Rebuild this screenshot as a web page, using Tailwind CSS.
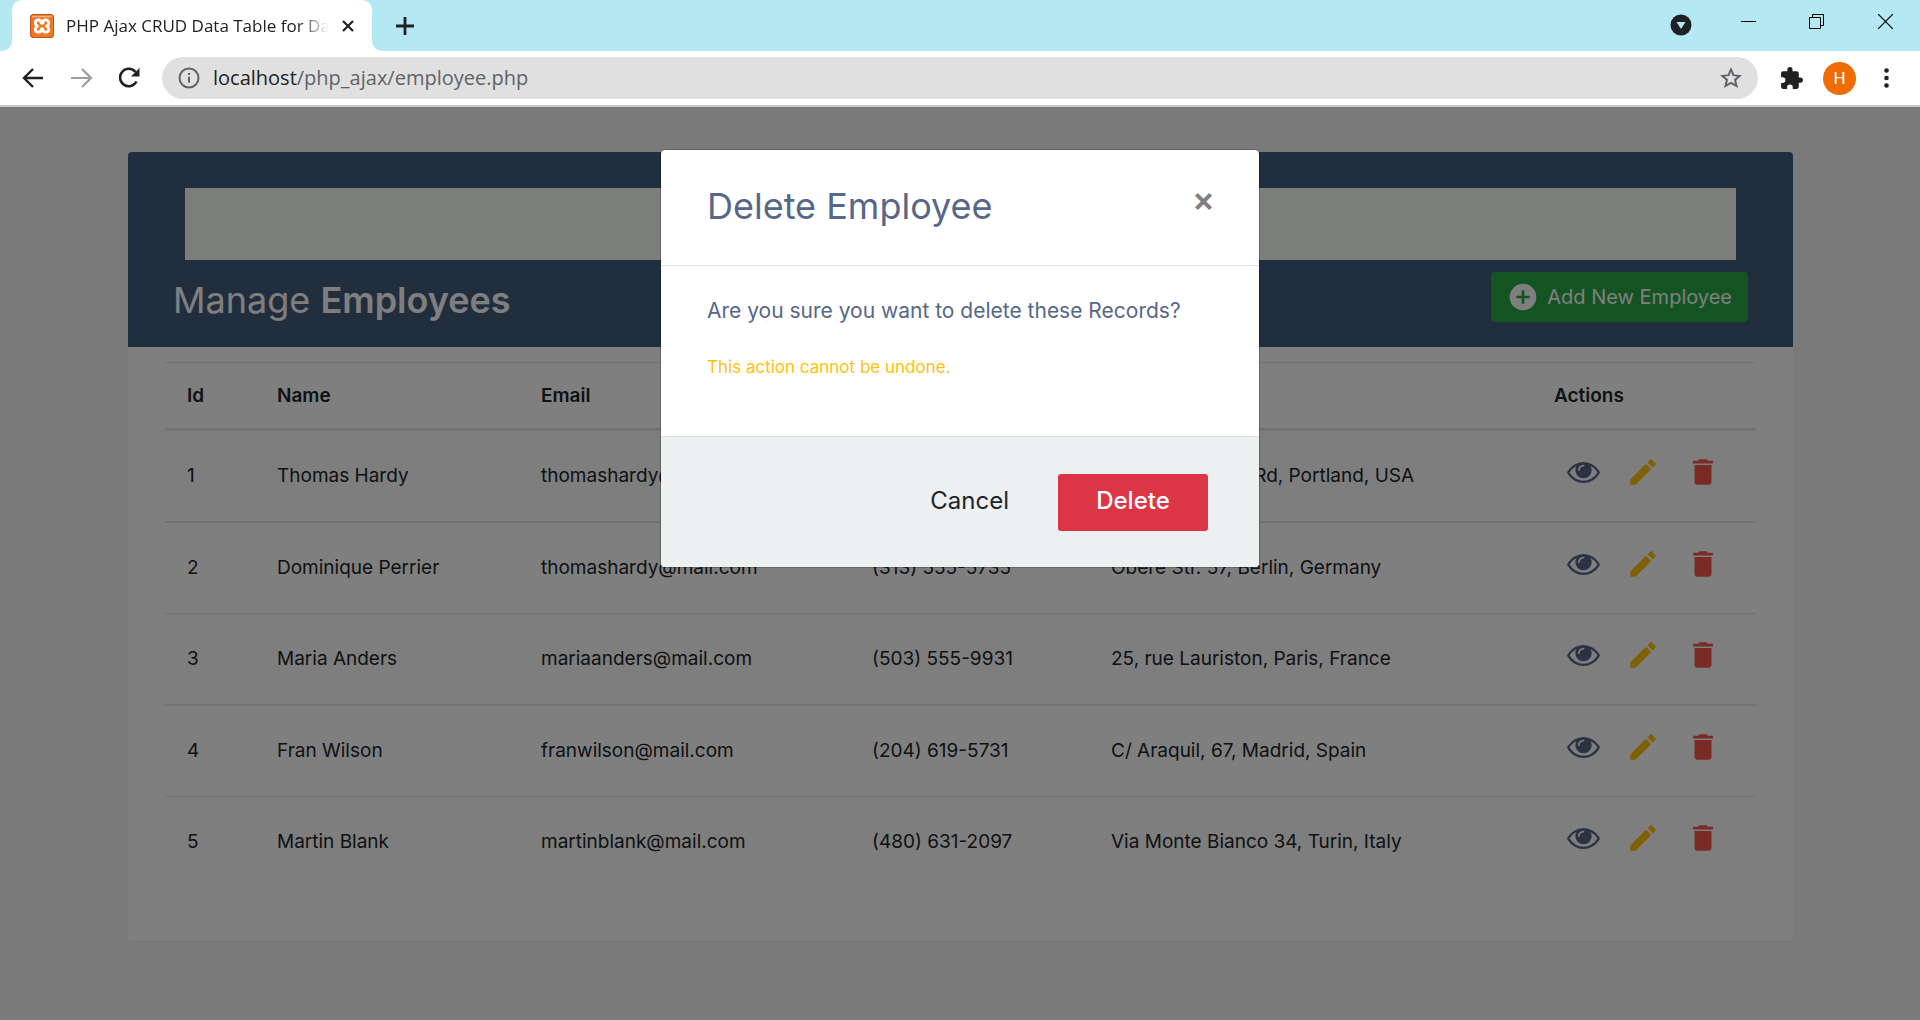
<!DOCTYPE html>
<html lang="en">
<head>
<meta charset="utf-8">
<meta name="viewport" content="width=device-width, initial-scale=1">
<title>PHP Ajax CRUD Data Table for Database</title>
<script src="https://cdn.jsdelivr.net/npm/@tailwindcss/browser@4"></script>
</head>
<body class="flex min-h-screen flex-col bg-[#f5f5f5] font-['Inter',sans-serif]">

<svg class="hidden">
  <symbol id="eye" viewBox="0 384 1792 1152"><path d="M1664 960q-152-236-381-353 61 104 61 225 0 185-131.5 316.5t-316.5 131.5-316.5-131.5-131.5-316.5q0-121 61-225-229 117-381 353 133 205 333.5 326.5t434.5 121.5 434.5-121.5 333.5-326.5zm-720-384q0-20-14-34t-34-14q-125 0-214.5 89.5t-89.5 214.5q0 20 14 34t34 14 34-14 14-34q0-86 61-147t147-61q20 0 34-14t14-34zm848 384q0 34-20 69-140 230-376.5 368.5t-499.5 138.5-499.5-139-376.5-368q-20-35-20-69t20-69q140-229 376.5-368t499.5-139 499.5 139 376.5 368q20 35 20 69z"/></symbol>
  <symbol id="edit" viewBox="0 0 24 24"><path d="M3 17.25V21h3.75L17.81 9.94l-3.75-3.75L3 17.25zM20.71 7.04c.39-.39.39-1.02 0-1.41l-2.34-2.34c-.39-.39-1.02-.39-1.41 0l-1.83 1.83 3.75 3.75 1.83-1.83z"/></symbol>
  <symbol id="trash" viewBox="0 0 24 24"><path d="M6 19c0 1.100.9 2 2 2h8c1.100 0 2-.9 2-2V7H6v12zM19 4h-3.500l-1-1h-5l-1 1H5v2h14V4z"/></symbol>
</svg>

<!-- Browser chrome -->
<header class="font-['Open_Sans',sans-serif]">
  <div class="flex h-[51px] items-stretch bg-[#b4e8f3]">
    <svg class="ml-[2px] h-[10px] w-[10px] self-end" viewBox="0 0 10 10"><path d="M10 0v10H0A10 10 0 0 0 10 0z" fill="#fff"/></svg>
    <div class="flex w-[360px] items-center rounded-t-[10px] bg-white pl-[18px] pr-[18px]">
      <svg class="h-6 w-6 shrink-0" viewBox="0 0 24 24">
        <rect x=".5" y=".5" width="23" height="23" rx="2.500" fill="#f37623" stroke="#b9541a"/>
        <path d="M2 2.500h20" stroke="#f9b384" stroke-width="1.500"/>
        <path d="M8.500 6C6.500 6 5.300 7.200 5.300 8.900c0 1.500.9 2.500 2.200 3.200-1.300.7-2.200 1.700-2.200 3.200 0 1.700 1.200 2.900 3.200 2.900 1.900 0 2.700-1.200 2.700-3.200h1.600c0 2 .8 3.200 2.700 3.200 2 0 3.200-1.200 3.200-2.900 0-1.500-.9-2.500-2.200-3.200 1.300-.7 2.200-1.700 2.200-3.200 0-1.700-1.200-2.900-3.200-2.900-1.900 0-2.700 1.200-2.700 3.200h-1.600c0-2-.8-3.200-2.700-3.200z" fill="none" stroke="#fff" stroke-width="2.800" stroke-linejoin="round"/>
      </svg>
      <span class="ml-3 min-w-0 flex-1 overflow-hidden whitespace-nowrap text-[17px] leading-6 text-[#202124] [mask-image:linear-gradient(to_right,black_88%,transparent)]">PHP Ajax CRUD Data Table for Database</span>
      <button aria-label="Close tab" class="ml-[13px] text-[#202124]"><svg class="h-3 w-3" viewBox="0 0 12 12"><path d="M1 1l10 10M11 1L1 11" stroke="currentColor" stroke-width="2.200"/></svg></button>
    </div>
    <svg class="h-[10px] w-[10px] self-end" viewBox="0 0 10 10"><path d="M0 0v10h10A10 10 0 0 1 0 0z" fill="#fff"/></svg>
    <button aria-label="New tab" class="ml-[14px] text-[#202124]"><svg class="h-[18px] w-[18px]" viewBox="0 0 18 18"><path d="M9 0v18M0 9h18" stroke="currentColor" stroke-width="2.800"/></svg></button>
    <div class="ml-auto flex items-start pr-[27px] pt-[14px] text-black">
      <button aria-label="Search tabs" class="mr-[49px]"><svg class="h-[22px] w-[22px]" viewBox="0 0 22 22"><circle cx="11" cy="11" r="10.500" fill="#202124"/><path d="M6.500 8h9L11 15z" fill="#b4e8f3"/></svg></button>
      <button aria-label="Minimize" class="mr-[53px]"><svg class="h-[15px] w-[15px]" viewBox="0 0 15 15"><path d="M0 7.500h15" stroke="currentColor"/></svg></button>
      <button aria-label="Restore" class="mr-[54px]"><svg class="h-[15px] w-[15px]" viewBox="0 0 15 15" fill="none" stroke="currentColor"><path d="M.5 3.500h11v11H.5zM3.500 3.500v-3h11v11h-3"/></svg></button>
      <button aria-label="Close window"><svg class="h-[15px] w-[15px]" viewBox="0 0 15 15"><path d="M0 0l15 15M15 0L0 15" stroke="currentColor" stroke-width="1.200"/></svg></button>
    </div>
  </div>
  <div class="flex h-14 items-center border-b-2 border-[#c8c8c8] bg-white pl-[22px] pr-[31px] text-[#202124]">
    <button aria-label="Back"><svg class="h-[22px] w-[22px]" viewBox="0 0 22 22" fill="none" stroke="currentColor" stroke-width="2.400"><path d="M21 11H3M11 2l-9 9 9 9"/></svg></button>
    <button aria-label="Forward" class="ml-[27px] text-[#9b9c9e]"><svg class="h-[22px] w-[22px]" viewBox="0 0 22 22" fill="none" stroke="currentColor" stroke-width="2.200"><path d="M0 11h18M11 2l9 9-9 9"/></svg></button>
    <button aria-label="Reload" class="ml-[25px]"><svg class="h-[22px] w-[22px]" viewBox="0 0 22 22"><path d="M18.500 14.500A8.700 8.700 0 1 1 17.500 5" fill="none" stroke="currentColor" stroke-width="2.500"/><path d="M21.500 1v8.500H13z" fill="currentColor"/></svg></button>
    <div class="ml-[22px] flex h-[42px] flex-1 items-center rounded-full bg-[#e0e0e0] pl-4 pr-[15px]">
      <svg class="h-[22px] w-[22px]" viewBox="0 0 22 22" fill="none" stroke="#5f6368" stroke-width="2"><circle cx="11" cy="11" r="9.500"/><path d="M11 9.800v6M11 6v2"/></svg>
      <div class="ml-[13px] flex-1 text-[20px] leading-7 text-[#5f6368]"><span class="text-[#202124]">localhost</span>/php_ajax/employee.php</div>
      <button aria-label="Bookmark"><svg class="h-6 w-6" viewBox="0 0 24 24"><path d="M23 9.200l-7.700-.7L12 1 8.700 8.500 1 9.200l5.800 5.100L5 22l7-4 7 4-1.800-7.700L23 9.200zM12 15.700l-4 2.400 1.100-4.600-3.500-3.100 4.700-.4L12 5.700l1.700 4.300 4.700.4-3.500 3.100 1.100 4.600-4-2.400z" fill="#5f6368"/></svg></button>
    </div>
    <button aria-label="Extensions" class="ml-[21px]"><svg class="h-[25px] w-[25px]" viewBox="0 0 24 24"><path d="M20.500 11H19V7c0-1.100-.9-2-2-2h-4V3.500a2.500 2.500 0 0 0-5 0V5H4c-1.100 0-2 .9-2 2v3.800h1.500a2.700 2.700 0 0 1 0 5.400H2V20c0 1.100.9 2 2 2h3.800v-1.500a2.700 2.700 0 0 1 5.400 0V22H17c1.100 0 2-.9 2-2v-4h1.500a2.500 2.500 0 0 0 0-5z" fill="currentColor"/></svg></button>
    <button aria-label="Profile" class="ml-[19px] h-[33px] w-[33px] rounded-full bg-[#ef6c00] font-['Roboto',sans-serif] text-[17px] leading-[33px] text-white">H</button>
    <button aria-label="Menu" class="ml-[28px]"><svg class="h-5 w-[5px]" viewBox="0 0 5 20" fill="currentColor"><circle cx="2.500" cy="2.500" r="2.300"/><circle cx="2.500" cy="10" r="2.300"/><circle cx="2.500" cy="17.500" r="2.300"/></svg></button>
  </div>
</header>

<!-- Page -->
<main class="relative flex-1 pb-12 pl-32 pr-[127px] pt-[45px]">
  <section class="rounded bg-white pb-[54px] shadow-[0_1px_1px_rgba(0,0,0,0.05)]">
    <div class="rounded-t bg-[#435d7d] px-[45px] pb-[19px] pt-9 text-white">
      <div class="mx-3 h-[72px] bg-[#f9fcf7]"></div>
      <div class="flex items-start justify-between pt-3">
        <h2 class="text-[36px] leading-[56px]">Manage <b class="font-semibold">Employees</b></h2>
        <button class="flex h-[50px] items-center gap-2 rounded bg-[#28a745] px-4 text-[20px] leading-7">
          <svg class="h-8 w-8" viewBox="0 0 24 24" fill="currentColor"><path d="M12 2C6.480 2 2 6.480 2 12s4.480 10 10 10 10-4.480 10-10S17.520 2 12 2zm5 11h-4v4h-2v-4H7v-2h4V7h2v4h4v2z"/></svg>
          Add New Employee
        </button>
      </div>
    </div>
    <div class="px-[37px] pt-[15px]">
      <table class="w-full table-fixed border-separate border-spacing-0 text-left text-[19px] leading-7 text-[#212529]">
        <colgroup><col class="w-[90px]"><col class="w-[264px]"><col class="w-[331px]"><col class="w-[239px]"><col><col class="w-[224px]"></colgroup>
        <thead>
          <tr class="*:h-[69px] *:border-b-[3px] *:border-t *:border-[#e6e6e6] *:px-[22px] *:font-semibold">
            <th>Id</th><th>Name</th><th>Email</th><th>Phone</th><th>Address</th><th>Actions</th>
          </tr>
        </thead>
        <tbody id="rows"></tbody>
      </table>
    </div>
  </section>

  <!-- Backdrop and dialog -->
  <div class="absolute inset-0 flex items-start justify-center bg-black/50 pt-[42px]">
    <div role="dialog" aria-modal="true" aria-labelledby="dialog-title" class="w-[600px] overflow-hidden rounded-[5px] border border-black/20 bg-white bg-clip-padding text-[#566787]">
      <div class="flex h-[115px] items-start justify-between pl-[46px] pr-11 pt-7">
        <h4 id="dialog-title" class="text-[36px] leading-[56px]">Delete Employee</h4>
        <button aria-label="Close" class="text-[34px] font-semibold leading-[42px] text-[#808080]">×</button>
      </div>
      <div class="h-[171px] border-t border-[#dee2e6] px-[46px] pt-[29px]">
        <p class="text-[21px] leading-8">Are you sure you want to delete these Records?</p>
        <p class="mt-7 text-[17px] leading-6 text-[#ffc107]">This action cannot be undone.</p>
      </div>
      <div class="flex h-[131px] items-start justify-end gap-[11px] border-t border-[#dee2e6] bg-[#ecf0f1] pr-[51px] pt-[37px] text-[24px]">
        <button class="h-[57px] px-[38px] pb-1 leading-9 text-[#212529]">Cancel</button>
        <button class="h-[57px] w-[150px] rounded-[3px] bg-[#dc3545] pb-1 font-medium leading-9 text-white">Delete</button>
      </div>
    </div>
  </div>
</main>

<script>
const employees = [
  ["Thomas Hardy", "thomashardy@mail.com", "(171) 555-2222", "89 Chiaroscuro Rd, Portland, USA"],
  ["Dominique Perrier", "thomashardy@mail.com", "(313) 555-5735", "Obere Str. 57, Berlin, Germany"],
  ["Maria Anders", "mariaanders@mail.com", "(503) 555-9931", "25, rue Lauriston, Paris, France"],
  ["Fran Wilson", "franwilson@mail.com", "(204) 619-5731", "C/ Araquil, 67, Madrid, Spain"],
  ["Martin Blank", "martinblank@mail.com", "(480) 631-2097", "Via Monte Bianco 34, Turin, Italy"]
];
// First row sits under the header rule; later rows alternate their divider thickness.
const rowStyle = [
  "bg-[#fcfcfc] *:h-[90px]",
  "*:h-[92px] *:border-t-2",
  "bg-[#fcfcfc] *:h-[91px] *:border-t",
  "*:h-[92px] *:border-t-2",
  "bg-[#fcfcfc] *:h-[91px] *:border-t"
];
document.getElementById("rows").innerHTML = employees.map((e, i) => `
  <tr class="${rowStyle[i]} *:border-[#e6e6e6] *:px-[22px] whitespace-nowrap">
    <td>${i + 1}</td>${e.map(v => `<td>${v}</td>`).join("")}
    <td><div class="flex items-center gap-[26px] pb-2 pl-[13px]">
      <a href="#" aria-label="View" class="text-[#566787]"><svg class="h-[21px] w-[33px] fill-current"><use href="#eye"/></svg></a>
      <a href="#" aria-label="Edit" class="text-[#ffc107]"><svg class="h-[34px] w-[34px] fill-current"><use href="#edit"/></svg></a>
      <a href="#" aria-label="Delete" class="text-[#f4564c]"><svg class="h-[34px] w-[34px] fill-current"><use href="#trash"/></svg></a>
    </div></td>
  </tr>`).join("");
</script>
</body>
</html>
